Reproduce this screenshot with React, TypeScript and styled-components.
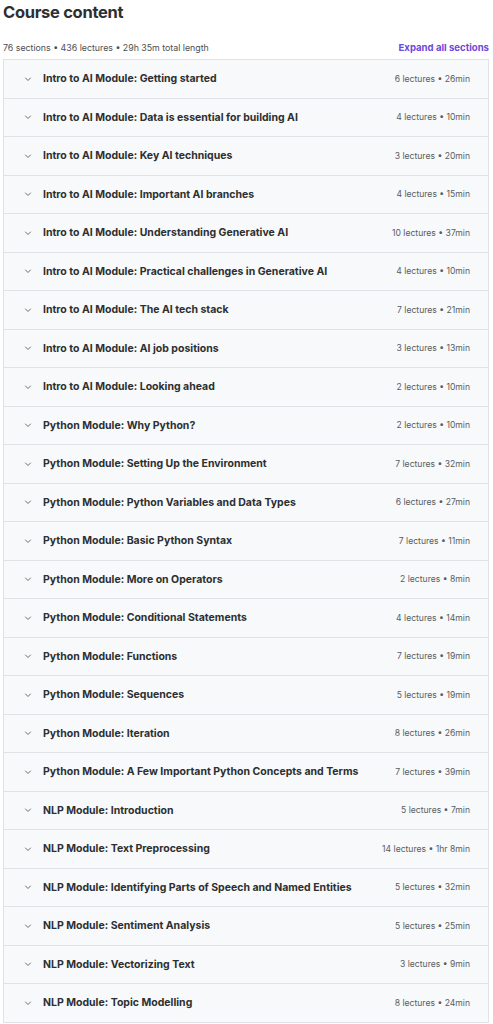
import styled, { createGlobalStyle } from "styled-components";

const GlobalStyle = createGlobalStyle`
  body {
    margin: 0;
    background: #ffffff;
    font-family: Inter, "Noto Sans", Arial, sans-serif;
    color: #2d2f31;
  }
`;

const Wrapper = styled.div`
  padding: 0 4px 0 3px;
`;

const Title = styled.h2`
  margin: 0;
  padding-top: 1px;
  font-size: 16.5px;
  line-height: 22px;
  font-weight: 700;
  letter-spacing: -0.3px;
`;

const Summary = styled.div`
  display: flex;
  justify-content: space-between;
  align-items: center;
  margin-top: 17px;
  height: 14px;
  margin-bottom: 5px;
  font-size: 8.8px;
`;

const Stats = styled.span`
  color: #4b4f52;
`;

const ExpandAll = styled.button`
  border: none;
  background: none;
  padding: 0;
  font: inherit;
  font-size: 9.6px;
  font-weight: 700;
  color: #7047d8;
  cursor: pointer;
`;

const SectionList = styled.div`
  border: 1px solid #dfe3e6;
  border-bottom: none;
`;

const Section = styled.div`
  display: flex;
  align-items: center;
  height: 37.5px;
  padding: 0 18px 0 20px;
  background: #f7f9fa;
  border-bottom: 1px solid #dfe3e6;
`;

const Chevron = styled.svg`
  width: 8px;
  height: 8px;
  margin-right: 11px;
  flex-shrink: 0;
`;

const SectionTitle = styled.span`
  flex: 1;
  font-size: 10.5px;
  font-weight: 700;
  color: #2d2f31;
  white-space: nowrap;
  overflow: hidden;
`;

const SectionMeta = styled.span`
  font-size: 8.6px;
  color: #595d61;
  white-space: nowrap;
`;

const sections: [string, number, string][] = [
  ["Intro to AI Module: Getting started", 6, "26min"],
  ["Intro to AI Module: Data is essential for building AI", 4, "10min"],
  ["Intro to AI Module: Key AI techniques", 3, "20min"],
  ["Intro to AI Module: Important AI branches", 4, "15min"],
  ["Intro to AI Module: Understanding Generative AI", 10, "37min"],
  ["Intro to AI Module: Practical challenges in Generative AI", 4, "10min"],
  ["Intro to AI Module: The AI tech stack", 7, "21min"],
  ["Intro to AI Module: AI job positions", 3, "13min"],
  ["Intro to AI Module: Looking ahead", 2, "10min"],
  ["Python Module: Why Python?", 2, "10min"],
  ["Python Module: Setting Up the Environment", 7, "32min"],
  ["Python Module: Python Variables and Data Types", 6, "27min"],
  ["Python Module: Basic Python Syntax", 7, "11min"],
  ["Python Module: More on Operators", 2, "8min"],
  ["Python Module: Conditional Statements", 4, "14min"],
  ["Python Module: Functions", 7, "19min"],
  ["Python Module: Sequences", 5, "19min"],
  ["Python Module: Iteration", 8, "26min"],
  ["Python Module: A Few Important Python Concepts and Terms", 7, "39min"],
  ["NLP Module: Introduction", 5, "7min"],
  ["NLP Module: Text Preprocessing", 14, "1hr 8min"],
  ["NLP Module: Identifying Parts of Speech and Named Entities", 5, "32min"],
  ["NLP Module: Sentiment Analysis", 5, "25min"],
  ["NLP Module: Vectorizing Text", 3, "9min"],
  ["NLP Module: Topic Modelling", 8, "24min"],
];

export default function App() {
  return (
    <Wrapper>
      <GlobalStyle />
      <Title>Course content</Title>
      <Summary>
        <Stats>76 sections • 436 lectures • 29h 35m total length</Stats>
        <ExpandAll>Expand all sections</ExpandAll>
      </Summary>
      <SectionList>
        {sections.map(([title, lectures, length]) => (
          <Section key={title}>
            <Chevron viewBox="0 0 8 8">
              <path d="M1.5 3 L4 5.5 L6.5 3" fill="none" stroke="#6a6f73" strokeWidth="1" strokeLinecap="round" strokeLinejoin="round" />
            </Chevron>
            <SectionTitle>{title}</SectionTitle>
            <SectionMeta>{lectures} lectures • {length}</SectionMeta>
          </Section>
        ))}
      </SectionList>
    </Wrapper>
  );
}
